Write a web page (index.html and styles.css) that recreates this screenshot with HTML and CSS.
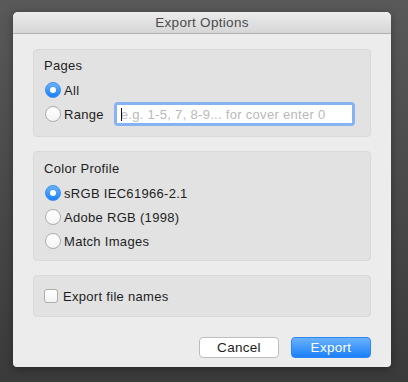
FILE: index.html
```html
<!DOCTYPE html>
<html lang="en">
<head>
    <meta charset="UTF-8">
    <meta name="viewport" content="width=device-width, initial-scale=1.0">
    <title>Export Options</title>
    <link rel="stylesheet" href="styles.css">
</head>
<body>
    <div class="window">
        <div class="titlebar">Export Options</div>
        <div class="content">
            <div class="group pages">
                <div class="group-label">Pages</div>
                <label class="option">
                    <span class="radio checked"></span>
                    <span>All</span>
                </label>
                <div class="option range-row">
                    <label class="option">
                        <span class="radio"></span>
                        <span>Range</span>
                    </label>
                    <div class="range-field">
                        <span class="caret"></span>
                        <input type="text" class="range-input" placeholder="e.g. 1-5, 7, 8-9... for cover enter 0">
                    </div>
                </div>
            </div>

            <div class="group profile">
                <div class="group-label">Color Profile</div>
                <label class="option">
                    <span class="radio checked"></span>
                    <span>sRGB IEC61966-2.1</span>
                </label>
                <label class="option">
                    <span class="radio"></span>
                    <span>Adobe RGB (1998)</span>
                </label>
                <label class="option">
                    <span class="radio"></span>
                    <span>Match Images</span>
                </label>
            </div>

            <div class="group names">
                <label class="option">
                    <span class="checkbox"></span>
                    <span>Export file names</span>
                </label>
            </div>

            <div class="buttons">
                <button class="button cancel">Cancel</button>
                <button class="button export">Export</button>
            </div>
        </div>
    </div>
</body>
</html>
```

FILE: styles.css
```css
:root {
    --window-bg: #ececec;
    --group-bg: #e2e2e2;
    --group-border: #d9d9d9;
    --text-color: #1e1e1e;
    --blue-top: #6bb2fb;
    --blue-bottom: #1a7ffa;
}

* {
    margin: 0;
    padding: 0;
    box-sizing: border-box;
}

body {
    font-family: 'Helvetica Neue', 'Liberation Sans', Arial, sans-serif;
    font-size: 13px;
    letter-spacing: 0.3px;
    color: var(--text-color);
    background: linear-gradient(#595959, #3a3a3a);
    width: 408px;
    height: 382px;
    overflow: hidden;
    padding: 12px 0 0 13px;
}

.window {
    width: 378px;
    height: 355px;
    background-color: var(--window-bg);
    border-radius: 5px 5px 4px 4px;
    box-shadow: 0 2px 8px rgba(0, 0, 0, 0.35);
    overflow: hidden;
}

.titlebar {
    height: 22px;
    line-height: 21px;
    text-align: center;
    font-size: 13.5px;
    color: #4b4b4b;
    background: linear-gradient(#ececec, #d6d6d6);
    border-bottom: 1px solid #b1b1b1;
}

.content {
    padding: 15px 20px 0 20px;
}

.group {
    background-color: var(--group-bg);
    border: 1px solid var(--group-border);
    border-radius: 4px;
    margin-bottom: 14px;
}

.pages {
    height: 88px;
    padding: 8px 10px 0 10px;
}

.profile {
    height: 110px;
    padding: 9px 10px 0 10px;
}

.names {
    height: 42px;
    padding: 0 10px;
    display: flex;
    align-items: center;
}

.group-label {
    height: 16px;
    line-height: 16px;
    margin-bottom: 4px;
}

.option {
    display: flex;
    align-items: center;
    height: 24px;
    gap: 3px;
}

.range-row {
    gap: 0;
}

.radio {
    width: 16px;
    height: 16px;
    border-radius: 50%;
    border: 1px solid #adadad;
    background: linear-gradient(#ffffff, #f4f4f4);
    margin-left: 1px;
    display: flex;
    align-items: center;
    justify-content: center;
}

.radio.checked {
    border-color: #3b8ef5;
    background: linear-gradient(var(--blue-top), var(--blue-bottom));
}

.radio.checked::after {
    content: '';
    width: 6px;
    height: 6px;
    border-radius: 50%;
    background-color: white;
}

.checkbox {
    width: 14px;
    height: 14px;
    border: 1px solid #adadad;
    border-radius: 3px;
    background: linear-gradient(#ffffff, #f4f4f4);
    margin-right: 2px;
}

.range-field {
    position: relative;
    margin-left: 10px;
    width: 241px;
    height: 24px;
    padding: 3px;
    border-radius: 4px;
    background-color: #85b3f4;
}

.caret {
    position: absolute;
    left: 7px;
    top: 6px;
    width: 1px;
    height: 13px;
    background-color: #111;
}

.range-input {
    width: 100%;
    height: 18px;
    border: none;
    outline: none;
    background-color: white;
    padding: 0 3px 0 4px;
    font-family: inherit;
    font-size: 13px;
    letter-spacing: 0.3px;
    color: var(--text-color);
}

.range-input::placeholder {
    color: #b9b9b9;
}

.buttons {
    display: flex;
    justify-content: flex-end;
    gap: 12px;
    padding-top: 6px;
}

.button {
    width: 80px;
    height: 21px;
    border-radius: 4px;
    font-family: inherit;
    font-size: 13.5px;
    letter-spacing: 0.3px;
}

.cancel {
    background: white;
    border: 1px solid #bdbdbd;
    color: var(--text-color);
}

.export {
    background: linear-gradient(var(--blue-top), var(--blue-bottom));
    border: 1px solid #2c87f5;
    color: white;
}
```
